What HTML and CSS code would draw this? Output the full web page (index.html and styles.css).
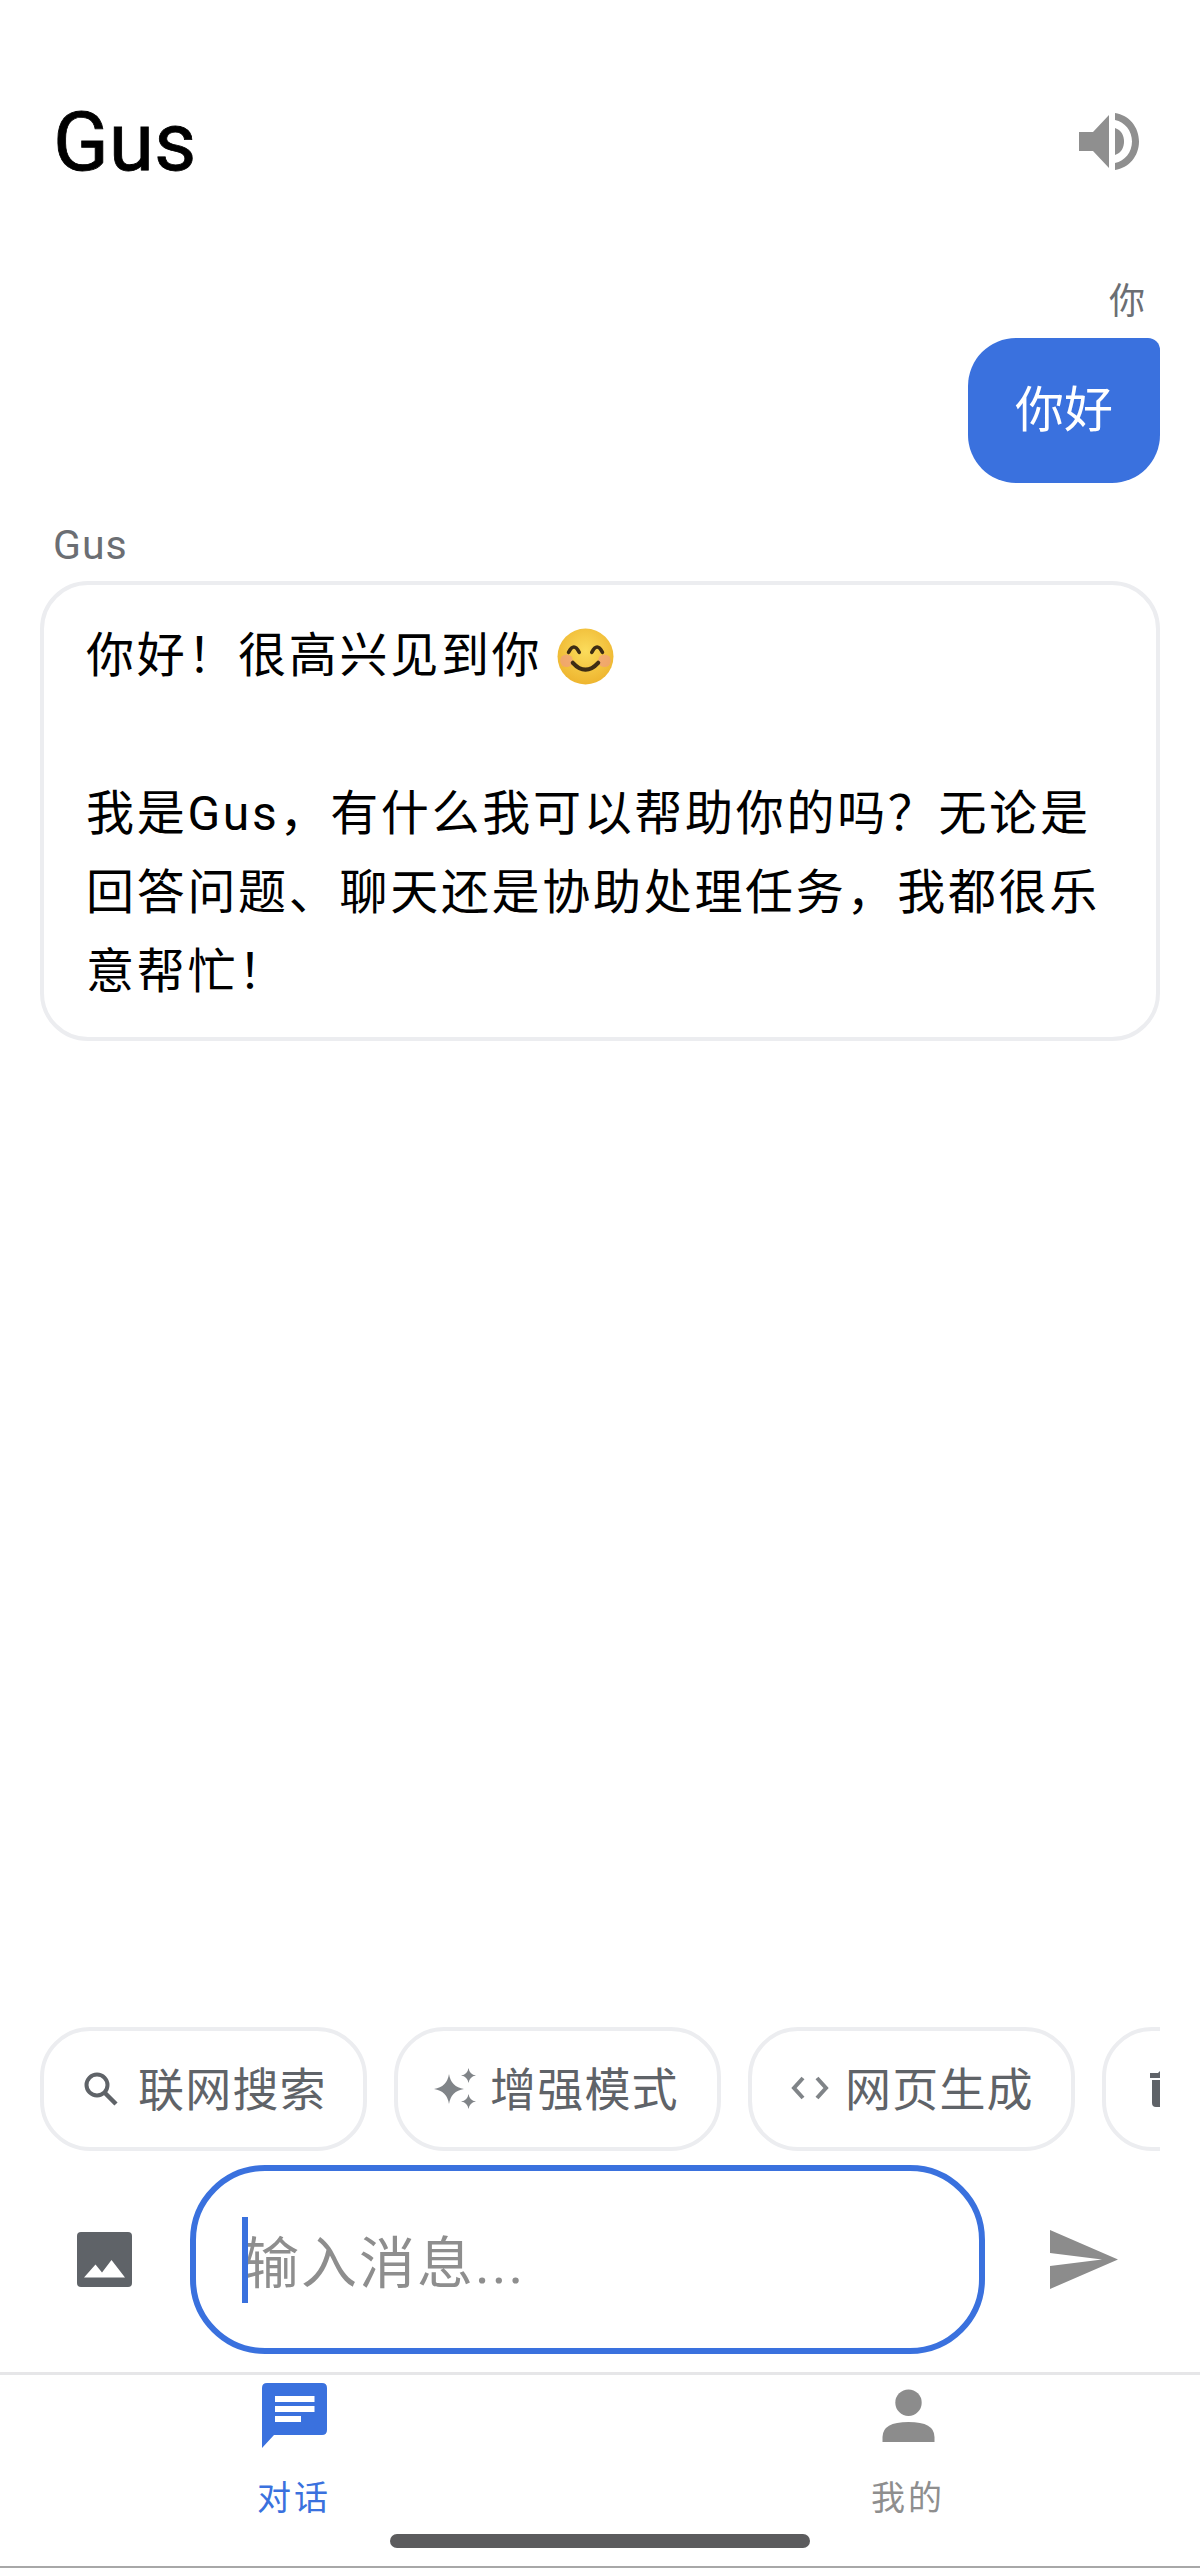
FILE: index.html
```html
<!DOCTYPE html>
<html>
<head>
    <meta charset="utf-8">
    <link rel="stylesheet" href="styles.css">
    <title>Gus</title>
</head>
<body>
    <div class="app">
        <header class="topbar">
            <h1>Gus</h1>
            <svg class="speaker" viewBox="0 0 60 57">
                <path d="M0 19H14L30 2V55L14 38H0Z"/>
                <path d="M36 15C42 17 45 22 45 28.500C45 35 42 40 36 42Z"/>
                <path d="M36 0C50 2 60 14 60 28.500C60 43 50 55 36 57V50C46 48 53 39 53 28.500C53 18 46 9 36 7Z"/>
            </svg>
        </header>

        <main class="messages">
            <div class="sender sender-me">你</div>
            <div class="bubble-row">
                <div class="bubble">你好</div>
            </div>
            <div class="sender sender-bot">Gus</div>
            <div class="card">
                <p>你好！很高兴见到你 <svg class="emoji" viewBox="0 0 54 54">
                    <defs>
                        <radialGradient id="face" cx="50%" cy="40%" r="60%">
                            <stop offset="0" stop-color="#fbdc5c"/>
                            <stop offset="1" stop-color="#eeb52f"/>
                        </radialGradient>
                    </defs>
                    <circle cx="27" cy="27" r="26.500" fill="url(#face)"/>
                    <circle cx="9" cy="31" r="6" fill="#f0988a" opacity=".6"/>
                    <circle cx="45" cy="31" r="6" fill="#f0988a" opacity=".6"/>
                    <path d="M11 23Q16 13 21 23M33 23Q38 13 43 23" fill="none" stroke="#3d2c14" stroke-width="3.500" stroke-linecap="round"/>
                    <path d="M15 33Q27 46 39 33" fill="none" stroke="#3d2c14" stroke-width="4" stroke-linecap="round"/>
                </svg></p>
                <p class="blank">&nbsp;</p>
                <p>我是Gus，有什么我可以帮助你的吗？无论是回答问题、聊天还是协助处理任务，我都很乐意帮忙！</p>
            </div>
        </main>

        <div class="chips">
            <div class="chip">
                <svg class="chip-icon" viewBox="0 0 34 34"><circle cx="13" cy="13" r="10.500" fill="none" stroke="#5f6368" stroke-width="4"/><path d="M21 21L32 32" stroke="#5f6368" stroke-width="4.500"/></svg>
                <span>联网搜索</span>
            </div>
            <div class="chip">
                <svg class="chip-icon spark" viewBox="0 0 42 42"><path d="M15 6Q17 19 30 21Q17 23 15 36Q13 23 0 21Q13 19 15 6Z" fill="#808488"/><path d="M34.500 0Q35.500 6.500 42 7.500Q35.500 8.500 34.500 15Q33.500 8.500 27 7.500Q33.500 6.500 34.500 0Z" fill="#808488"/><path d="M34.500 26Q35.500 32.500 42 33.500Q35.500 34.500 34.500 41Q33.500 34.500 27 33.500Q33.500 32.500 34.500 26Z" fill="#808488"/></svg>
                <span>增强模式</span>
            </div>
            <div class="chip">
                <svg class="chip-icon code" viewBox="0 0 38 24"><path d="M12 2L3 12L12 22M26 2L35 12L26 22" fill="none" stroke="#808488" stroke-width="4"/></svg>
                <span>网页生成</span>
            </div>
            <div class="chip">
                <svg class="chip-icon trash" viewBox="0 0 34 36"><path d="M0 2H8L10 0H24L26 2H34V7H0ZM2 9H32V32Q32 36 28 36H6Q2 36 2 32Z" fill="#5f6368"/></svg>
            </div>
        </div>

        <div class="composer">
            <svg class="image-btn" viewBox="0 0 55 55">
                <rect width="55" height="55" rx="4" fill="#5f6368"/>
                <path d="M7 45.500L18.500 32.500L25 40.500L34.500 28L48 45.500Z" fill="#fff"/>
            </svg>
            <div class="input">
                <span class="caret"></span>
                <span class="placeholder">输入消息...</span>
            </div>
            <svg class="send" viewBox="0 0 68 59"><path d="M0 0L68 29.500L0 59V36L52 29.500L0 23Z"/></svg>
        </div>

        <nav class="tabs">
            <div class="tab active">
                <svg class="tab-icon" viewBox="0 0 65 65"><path d="M5 0H60Q65 0 65 5V47Q65 52 60 52H12L0 65V5Q0 0 5 0Z" fill="#3a71de"/><path d="M13 13H52.500V19H13ZM13 23H52.500V29H13ZM13 33H39V39H13Z" fill="#fff"/></svg>
                <span>对话</span>
            </div>
            <div class="tab">
                <svg class="tab-icon" viewBox="0 0 65 65"><circle cx="32.500" cy="19.700" r="13.200" fill="#8c8c8c"/><path d="M6.500 59V54Q6.500 39 32.500 39T58.500 54V59Z" fill="#8c8c8c"/></svg>
                <span>我的</span>
            </div>
        </nav>
        <div class="home-bar"></div>
    </div>
</body>
</html>
```

FILE: styles.css
```css
* {box-sizing: border-box;}
html, body {margin: 0; padding: 0; background: #fff;}
body {font-family: Roboto, "Noto Sans CJK SC", sans-serif;}

.app {height: 2568px; display: flex; flex-direction: column; overflow: hidden; border-bottom: 2px solid #a8a8a8;}

.topbar {height: 270px; padding: 96px 61px 0 53px; display: flex; justify-content: space-between; align-items: flex-start; flex: none;}
.topbar h1 {margin: 0; font-size: 82px; line-height: 92px; font-weight: 400; -webkit-text-stroke: 0.8px #000; color: #000;}
.speaker {width: 60px; height: 57px; margin-top: 17px; fill: #8f8f8f;}

.messages {flex: 1; padding: 0 40px;}
.sender {font-size: 36px; line-height: 46px; color: #6b6e73; padding-left: 13px;}
.sender-me {text-align: right; padding: 8px 14px 0 0; height: 67px; margin-top: 1px; letter-spacing: 1px;}
.sender-bot {font-size: 41px; letter-spacing: 1px;}
.bubble-row {display: flex; justify-content: flex-end; margin-bottom: 39px;}
.bubble {background: #3a71de; color: #fff; font-size: 49px; line-height: 145px; height: 145px; padding: 0 47px; border-radius: 48px 12px 48px 48px;}
.card {margin-top: 13px; height: 460px; border: 4px solid #ecedf0; border-radius: 48px; padding: 31px 42px;}
.card p {margin: 0; font-size: 48px; line-height: 79px; letter-spacing: 2.700px; color: #000;}
.emoji {width: 57px; height: 57px; vertical-align: -13px;}

.chips {display: flex; gap: 27px; margin: 0 40px; overflow: hidden; flex: none; height: 124px;}
.chip {flex: none; width: 327px; height: 124px; border: 4px solid #ecedf0; border-radius: 50px; display: flex; align-items: center; padding: 0 0 0 40px; gap: 20px; font-size: 46px; letter-spacing: 1.200px; color: #5f6368;}
.chip span {margin-top: -6px;}
.chip-icon {width: 34px; height: 34px; flex: none;}
.spark {width: 42px; height: 42px; margin: 0 -6px 0 -4px;}
.code {width: 38px; height: 24px; margin: -2px -4px 0 -1px;}
.trash {height: 36px; margin-left: 4px;}

.composer {flex: none; height: 221px; padding: 14px 0 0; display: flex; align-items: flex-start; position: relative;}
.image-btn {width: 55px; height: 55px; margin: 67px 58px 0 77px; flex: none;}
.input {width: 795px; height: 189px; border: 6px solid #3a71de; border-radius: 75px; display: flex; align-items: center; position: relative; padding-left: 48px; flex: none;}
.caret {position: absolute; left: 46px; top: 46px; width: 6px; height: 86px; background: #3a71de;}
.placeholder {font-size: 56px; letter-spacing: 2px; color: #8e8e8e; margin: -3px 0 0 -1px;}
.send {width: 68px; height: 59px; margin: 65px 0 0 65px; fill: #8c8c8c; flex: none;}

.tabs {flex: none; height: 150px; border-top: 3px solid #e6e6e8; display: flex; justify-content: space-between; padding: 0 232px 0 234px; margin-bottom: 44px;}
.tab {width: 120px; display: flex; flex-direction: column; align-items: center; font-size: 34px; color: #8e8e8e; letter-spacing: 3px; padding-top: 8px;}
.tab.active {color: #3a71de;}
.tab-icon {width: 65px; height: 65px; margin-bottom: 23px;}

.home-bar {position: absolute; left: 390px; top: 2534px; width: 420px; height: 14px; border-radius: 7px; background: #5c5c5e;}
```
